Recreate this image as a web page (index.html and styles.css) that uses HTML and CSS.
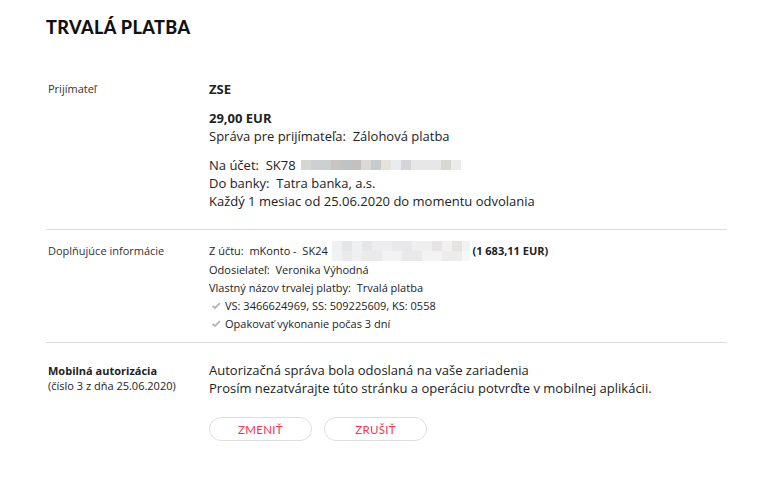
FILE: index.html
```html
<!DOCTYPE html>
<html lang="sk">
<head>
<meta charset="utf-8">
<link rel="stylesheet" href="styles.css">
</head>
<body>
<div class="page">
  <h1 class="title">TRVALÁ PLATBA</h1>

  <section class="row row-main">
    <div class="label">Prijímateľ</div>
    <div class="value">
      <div class="strong">ZSE</div>
      <div class="group">
        <div class="strong">29,00 EUR</div>
        <div>Správa pre prijímateľa:&nbsp; Zálohová platba</div>
      </div>
      <div class="group">
        <div>Na účet:&nbsp; SK78 <span class="blur blur-a"></span></div>
        <div>Do banky:&nbsp; Tatra banka, a.s.</div>
        <div>Každý 1 mesiac od 25.06.2020 do momentu odvolania</div>
      </div>
    </div>
  </section>

  <section class="row row-info">
    <div class="label">Doplňujúce informácie</div>
    <div class="value small">
      <div>Z účtu:&nbsp; mKonto -&nbsp; SK24 <span class="blur blur-b"></span> <b class="amt">(1 683,11 EUR)</b></div>
      <div>Odosielateľ:&nbsp; Veronika Výhodná</div>
      <div>Vlastný názov trvalej platby:&nbsp; Trvalá platba</div>
      <div class="check"><svg viewBox="0 0 10 10" width="10" height="10"><path d="M0.8 5.5 L2.3 4.2 L4 5.8 L8.2 1.4 L9.5 2.7 L4 8.2 Z" fill="#b4b4b4"/></svg>VS: 3466624969, SS: 509225609, KS: 0558</div>
      <div class="check"><svg viewBox="0 0 10 10" width="10" height="10"><path d="M0.8 5.5 L2.3 4.2 L4 5.8 L8.2 1.4 L9.5 2.7 L4 8.2 Z" fill="#b4b4b4"/></svg>Opakovať vykonanie počas 3 dní</div>
    </div>
  </section>

  <section class="row row-auth">
    <div class="label auth-label">
      <div class="strong">Mobilná autorizácia</div>
      <div>(číslo 3 z dňa 25.06.2020)</div>
    </div>
    <div class="value">
      <div>Autorizačná správa bola odoslaná na vaše zariadenia</div>
      <div>Prosím nezatvárajte túto stránku a operáciu potvrďte v mobilnej aplikácii.</div>
      <div class="buttons">
        <button class="btn">ZMENIŤ</button>
        <button class="btn">ZRUŠIŤ</button>
      </div>
    </div>
  </section>
</div>
</body>
</html>
```

FILE: styles.css
```css
* { box-sizing: border-box; }
body {
  margin: 0;
  background: #fff;
  font-family: "Open Sans", "Liberation Sans", sans-serif;
  color: #222;
}
.page {
  width: 727px;
  padding: 0 0 0 46px;
}
.title {
  margin: 0;
  padding-top: 17px;
  height: 80px;
  font-family: "Lato", "DejaVu Sans", sans-serif;
  font-weight: 900;
  font-size: 18px;
  letter-spacing: 0.4px;
  line-height: 20px;
  color: #111;
}
.row {
  display: grid;
  grid-template-columns: 163px 1fr;
  border-bottom: 1px solid #dcdcdc;
}
.label {
  padding-left: 2px;
  font-size: 11px;
  color: #333;
}
.value {
  font-size: 13px;
  line-height: 18px;
  color: #222;
}
.strong { font-weight: 700; }
.row-main { padding: 0 0 19px; }
.row-main .label { line-height: 18px; }
.group { margin-top: 11px; }
.row-info { padding: 12px 0 9px; }
.row-info .label { line-height: 18px; }
.value.small { font-size: 11px; line-height: 18px; }
.amt { font-weight: 700; }
.blur {
  display: inline-block;
  vertical-align: middle;
}
.blur-a {
  width: 160px;
  height: 10px;
  margin-left: 2px;
  margin-top: -3px;
  background: linear-gradient(90deg,
    #d6d6d3 0 10px, #cdd0d0 10px 30px, #c8c4c2 30px 40px, #bec3c4 40px 50px,
    #c5c0c0 50px 60px, #d8d8d4 60px 70px, #c5ccce 70px 80px, #e6e4da 80px 90px,
    #eaebf1 90px 100px, #d6d4d9 100px 110px, #e7e7e7 110px 140px,
    #d8d8d3 140px 150px, #ebebeb 150px 160px);
}
.blur-b {
  width: 138px;
  height: 20px;
  margin: -2px 0 0 1px;
  background:
    linear-gradient(90deg,
      #eef0f1 0 10px, #e3e5e7 10px 20px, #eef0f1 20px 30px, #e6e6e8 30px 40px,
      #ededef 40px 60px, #e8e8ea 60px 80px, #efefef 80px 100px, #e6e4e4 100px 110px,
      #f1f1f1 110px 120px, #e7e2e2 120px 130px, #f2f2f2 130px 138px) top / 100% 10px no-repeat,
    linear-gradient(90deg,
      #f1f2f3 0 10px, #e8eaec 10px 20px, #f0f0f1 20px 30px, #eaeaeb 30px 50px,
      #f2f2f2 50px 70px, #e9e9e9 70px 90px, #f3f3f3 90px 110px, #ececec 110px 130px,
      #f6f6f6 130px 138px) bottom / 100% 10px no-repeat;
}
.check { display: flex; align-items: center; }
.check svg { margin: 0 4px 0 2px; flex: none; }
.row-auth {
  border-bottom: none;
  padding-top: 18px;
}
.auth-label {
  line-height: 15px;
  color: #222;
  padding-top: 2px;
}
.row-auth .value { font-size: 13px; line-height: 18px; }
.buttons {
  display: flex;
  gap: 12px;
  margin-top: 20px;
}
.btn {
  width: 103px;
  height: 24px;
  border: 1px solid #dedede;
  border-radius: 12px;
  background: #fff;
  color: #ee3550;
  font-family: "Lato", "Open Sans", sans-serif;
  font-size: 11.5px;
  letter-spacing: 0.3px;
  padding: 0;
  cursor: pointer;
}
```
